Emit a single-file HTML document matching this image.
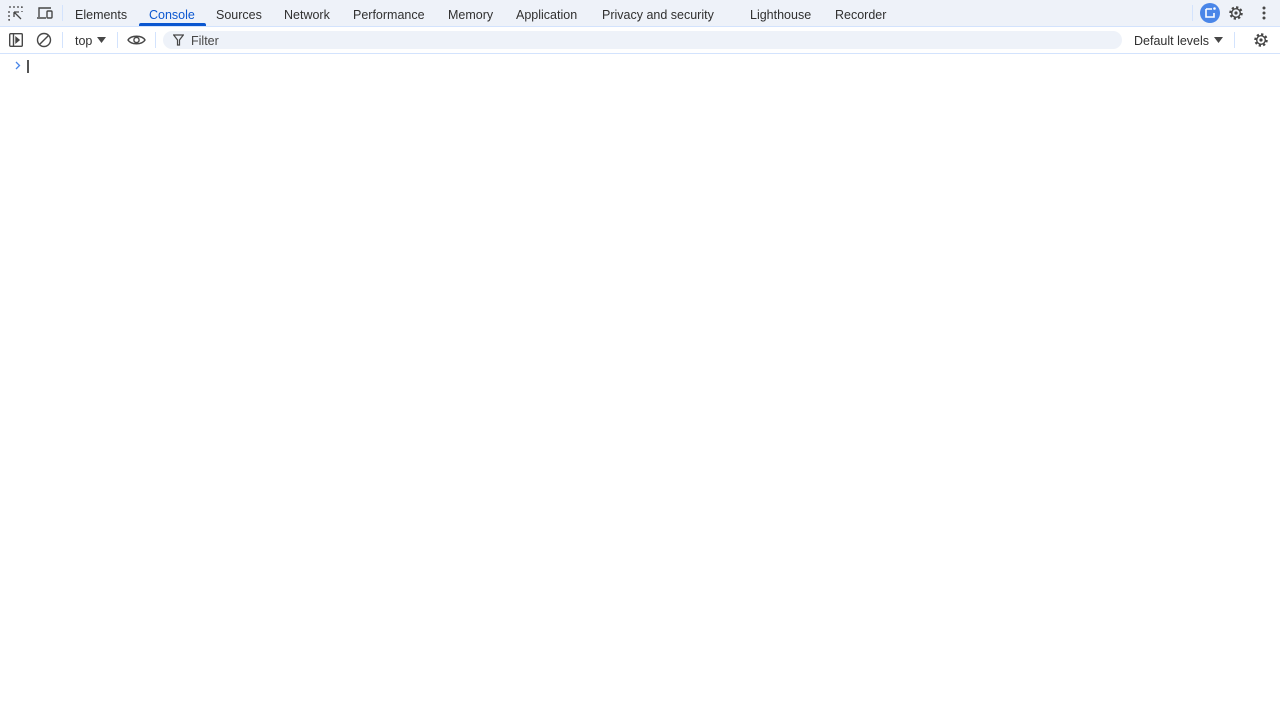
<!DOCTYPE html>
<html><head><meta charset="utf-8"><style>
body{margin:0;width:1280px;height:720px;background:#fff;font-family:"Liberation Sans",sans-serif;font-size:12.5px;color:#1f1f1f;position:relative;overflow:hidden}
.tb{position:absolute;left:0;top:0;width:1280px;height:26px;background:#eef2f9;border-bottom:1px solid #d3e3fd}
.t{position:absolute;top:8px;white-space:nowrap;color:#303030}
.sel{color:#0b57d0}
.ul{position:absolute;left:139px;top:23px;width:67px;height:3px;background:#0b57d0;border-radius:2px 2px 0 0}
.tb2{position:absolute;left:0;top:27px;width:1280px;height:26px;border-bottom:1px solid #d3e3fd}
.sep{position:absolute;width:1px;background:#d3e3fd}
.filter{position:absolute;left:163px;top:31px;width:959px;height:18px;background:#eef2f9;border-radius:9px}
svg{position:absolute}
</style></head><body>
<div class="tb">
<svg style="left:8px;top:6px" width="16" height="16" viewBox="0 0 16 16" fill="none" stroke="#474747" stroke-width="1.3"><path d="M1 1h2M5 1h2M9 1h2M13 1h1v1M1 5v2M1 9v2M1 13v1h1M14 5v1M6 6l7 7M6 6h5M6 6v5"/></svg>
<svg style="left:36px;top:6px" width="18" height="15" viewBox="0 0 18 15" fill="none" stroke="#474747" stroke-width="1.4"><path d="M3 11V2h12M1 12h9"/><rect x="11" y="5" width="5" height="7" rx="1"/></svg>
<div class="sep" style="left:62px;top:5px;height:16px"></div>
<span class="t" style="left:75px">Elements</span>
<span class="t sel" style="left:149px">Console</span>
<span class="t" style="left:216px">Sources</span>
<span class="t" style="left:284px">Network</span>
<span class="t" style="left:353px">Performance</span>
<span class="t" style="left:448px">Memory</span>
<span class="t" style="left:516px">Application</span>
<span class="t" style="left:602px">Privacy and security</span>
<span class="t" style="left:750px">Lighthouse</span>
<span class="t" style="left:835px">Recorder</span>
<div class="ul"></div>
<div class="sep" style="left:1192px;top:5px;height:16px"></div>
<svg style="left:1200px;top:3px" width="20" height="20" viewBox="0 0 20 20"><circle cx="10" cy="10" r="10" fill="#4a86e8"/><path d="M6 6h6M6 6v8h8v-4" stroke="#fff" stroke-width="1.6" fill="none"/><circle cx="14.5" cy="5.5" r="1.3" fill="#fff"/></svg>
<svg style="left:1228px;top:5px" width="16" height="16" viewBox="0 0 16 16"><circle cx="8" cy="8" r="5.5" fill="none" stroke="#474747" stroke-width="2.5" stroke-dasharray="2.2 2.1"/><circle cx="8" cy="8" r="4.3" fill="none" stroke="#474747" stroke-width="1.4"/><circle cx="8" cy="8" r="1.6" fill="#474747"/></svg>
<svg style="left:1262px;top:6px" width="4" height="14" viewBox="0 0 4 14" fill="#474747"><circle cx="2" cy="2" r="1.5"/><circle cx="2" cy="7" r="1.5"/><circle cx="2" cy="12" r="1.5"/></svg>
</div>
<div class="tb2">
<svg style="left:9px;top:6px" width="14" height="14" viewBox="0 0 14 14" fill="none" stroke="#474747" stroke-width="1.4"><rect x="0.7" y="0.7" width="12.6" height="12.6" rx="1"/><path d="M4.5 1v12"/><path d="M7 4.5l3 2.5-3 2.5z" fill="#474747"/></svg>
<svg style="left:36px;top:5px" width="16" height="16" viewBox="0 0 16 16" fill="none" stroke="#474747" stroke-width="1.4"><circle cx="8" cy="8" r="6.5"/><path d="M3.5 12.5l9-9"/></svg>
<div class="sep" style="left:62px;top:5px;height:16px"></div>
<span class="t" style="left:75px;top:7px">top</span>
<svg style="left:97px;top:10px" width="9" height="6" viewBox="0 0 9 6"><path d="M0 0h9L4.5 6z" fill="#474747"/></svg>
<div class="sep" style="left:117px;top:5px;height:16px"></div>
<svg style="left:127px;top:7px" width="19" height="12" viewBox="0 0 19 12" fill="none" stroke="#474747" stroke-width="1.4"><path d="M1 6C4 1 15 1 18 6 15 11 4 11 1 6z"/><circle cx="9.5" cy="6" r="2.6"/></svg>
<div class="sep" style="left:155px;top:5px;height:16px"></div>
</div>
<div class="filter"></div>
<svg style="left:173px;top:34px" width="11" height="12" viewBox="0 0 11 12" fill="none" stroke="#474747" stroke-width="1.2"><path d="M0.7 1h9.6L6.5 6v5H4.5V6z"/></svg>
<span class="t" style="left:191px;top:34px;color:#474747">Filter</span>
<span class="t" style="left:1134px;top:34px">Default levels</span>
<svg style="left:1214px;top:37px" width="9" height="6" viewBox="0 0 9 6"><path d="M0 0h9L4.5 6z" fill="#474747"/></svg>
<div class="sep" style="left:1234px;top:32px;height:16px"></div>
<svg style="left:1253px;top:32px" width="16" height="16" viewBox="0 0 16 16"><circle cx="8" cy="8" r="5.5" fill="none" stroke="#474747" stroke-width="2.5" stroke-dasharray="2.2 2.1"/><circle cx="8" cy="8" r="4.3" fill="none" stroke="#474747" stroke-width="1.4"/><circle cx="8" cy="8" r="1.6" fill="#474747"/></svg>
<svg style="left:15px;top:61px" width="6" height="9" viewBox="0 0 6 9" fill="none" stroke="#4a86e8" stroke-width="1.3"><path d="M1 1l3.5 3.5L1 8"/></svg>
<div style="position:absolute;left:27px;top:60px;width:1.5px;height:13px;background:#555"></div>
</body></html>
